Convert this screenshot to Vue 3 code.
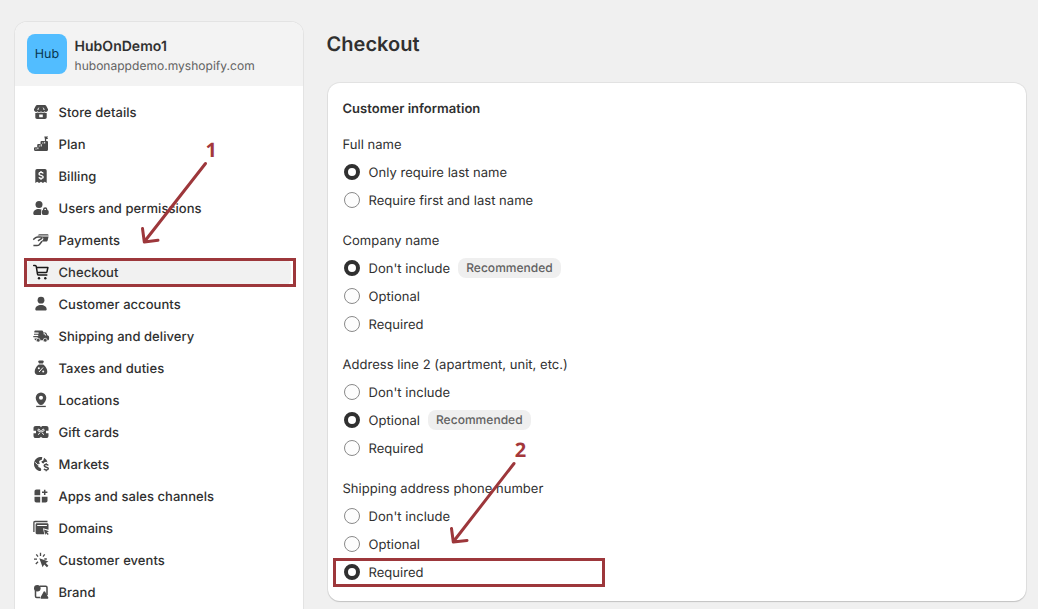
<script setup>
const nav = [
  { id: 'store', label: 'Store details' },
  { id: 'plan', label: 'Plan' },
  { id: 'billing', label: 'Billing' },
  { id: 'users', label: 'Users and permissions' },
  { id: 'payments', label: 'Payments' },
  { id: 'checkout', label: 'Checkout', active: true },
  { id: 'accounts', label: 'Customer accounts' },
  { id: 'shipping', label: 'Shipping and delivery' },
  { id: 'taxes', label: 'Taxes and duties' },
  { id: 'locations', label: 'Locations' },
  { id: 'gift', label: 'Gift cards' },
  { id: 'markets', label: 'Markets' },
  { id: 'apps', label: 'Apps and sales channels' },
  { id: 'domains', label: 'Domains' },
  { id: 'events', label: 'Customer events' },
  { id: 'brand', label: 'Brand' },
]

const groups = [
  { title: 'Full name', options: ['Only require last name', 'Require first and last name'], picked: 0 },
  { title: 'Company name', options: ["Don't include", 'Optional', 'Required'], picked: 0, recommended: 0 },
  { title: 'Address line 2 (apartment, unit, etc.)', options: ["Don't include", 'Optional', 'Required'], picked: 1, recommended: 1 },
  { title: 'Shipping address phone number', options: ["Don't include", 'Optional', 'Required'], picked: 2 },
]
</script>

<template>
  <div class="page">
    <aside class="sidebar">
      <header class="shop">
        <div class="avatar">Hub</div>
        <div class="shop-text">
          <div class="shop-name">HubOnDemo1</div>
          <div class="shop-url">hubonappdemo.myshopify.com</div>
        </div>
      </header>
      <nav class="nav">
        <div v-for="item in nav" :key="item.id" class="item" :class="{ active: item.active }">
          <svg class="icon" viewBox="0 0 20 20">
            <template v-if="item.id === 'store'">
              <path d="M6.200 3h7.600c.7 0 1.200.3 1.500.9L17 7.200v.9a2 2 0 0 1-3.500 1.200 2.300 2.300 0 0 1-3.500 0 2.300 2.300 0 0 1-3.500 0A2 2 0 0 1 3 8.100v-.9l1.700-3.300c.3-.6.8-.9 1.500-.9z" />
              <path d="M4.300 11c1 .2 1.700 0 2.300-.4 1 .6 2.400.6 3.400 0 1 .6 2.400.6 3.400 0 .6.400 1.300.6 2.300.4v4.300c0 1-.7 1.700-1.700 1.700H6c-1 0-1.700-.7-1.700-1.700z" />
              <path class="cut" d="M8.200 12.500h3.600v2.700H8.200z" /><path class="cutline" d="M6.900 8c0-.9.400-1.500.9-2.300M13.100 8c0-.9-.4-1.500-.9-2.300" />
            </template>
            <template v-else-if="item.id === 'plan'">
              <path d="M13.500 7H16a1 1 0 0 1 1 1v7.500a1.500 1.500 0 0 1-1.500 1.500h-11A1.500 1.500 0 0 1 3 15.500v-1.200a1 1 0 0 1 1-1h2.200V11a1 1 0 0 1 1-1h2.300V8a1 1 0 0 1 1-1z" />
              <path class="cutline" d="M6.900 15.200v-1.700M10.200 12.500v-2.300M13.700 9.500v-1.700M4.500 15h1M7.800 12h1M11.300 9h1" />
              <path d="M13.300 2.500h3.900l-1 1.200 1 1.200h-2v2.500h-1.300V4.900z" />
            </template>
            <template v-else-if="item.id === 'billing'">
              <path d="M6 3h8a1.700 1.700 0 0 1 1.700 1.700V17l-1.900-1.200L11.900 17 10 15.800 8.100 17l-1.900-1.200L4.300 17V4.700A1.700 1.700 0 0 1 6 3z" />
              <path class="cutline thick" d="M12.200 7.500C11.500 6 8 6 8 7.900c0 1.900 4.200 1 4.200 3 0 1.900-3.600 1.900-4.300.3M10 5v1.300M10 12.500v1.300" />
            </template>
            <template v-else-if="item.id === 'users'">
              <circle cx="8" cy="6.500" r="3.500" />
              <path d="M2.300 15.500c0-2.600 2.300-4.400 5.500-4.400 1.200 0 2.100.3 2.900.7-.5.500-.7 1-.7 1.700V17H3.600c-.8 0-1.300-.6-1.300-1.500z" />
              <path d="M12 12v-.6a2.200 2.200 0 0 1 4.400 0v.7c.8.100 1.300.7 1.300 1.500V15a2 2 0 0 1-2 2h-3a2 2 0 0 1-2-2v-1.400c0-.8.500-1.400 1.300-1.600zm1.400 0H15v-.6c0-1-1.600-1-1.600 0z" />
            </template>
            <template v-else-if="item.id === 'payments'">
              <path d="M9.300 4.200H16c1 0 1.700.5 1.600 1.400H6.500c.8-.9 1.600-1.400 2.800-1.400z" />
              <path d="M10.500 6.600h7.100l-.9 3.700c-.2.800-.8 1.200-1.600 1.200h-4.900l1.700-1.600c1-1 .4-2.400-1.400-3.300z" />
              <path class="line" d="M2.200 9.600 4.700 7.700c.7-.5 1.300-.8 2.100-.8h2.700c1.700 0 2 1 .9 1.700L7 10.900M2.400 15.600h3.400c1.100 0 2-.4 2.700-1.200l2.500-3.100" />
            </template>
            <template v-else-if="item.id === 'checkout'">
              <path class="cart" d="M2.700 3.600h1.500c.6 0 1 .4 1.100 1l1.200 7.500c.1.600.6 1 1.200 1h8.100M5.500 5.500h11.400l-.9 4.200c-.1.600-.5.900-1.100.9H6.300" />
              <circle cx="8" cy="16.300" r="1.200" /><circle cx="14.300" cy="16.300" r="1.200" />
            </template>
            <template v-else-if="item.id === 'accounts'">
              <circle cx="10" cy="6.200" r="3.400" />
              <path d="M4.300 15.300c0-2.700 2.500-4.400 5.700-4.400s5.700 1.700 5.700 4.400c0 .8-.6 1.300-1.400 1.300H5.700c-.8 0-1.400-.5-1.400-1.300z" />
            </template>
            <template v-else-if="item.id === 'shipping'">
              <path d="M4.600 4.500h6c1 0 1.700.7 1.700 1.700v.3h1.900c.7 0 1.200.3 1.400 1l.7 1.800 1 .5c.5.300.8.700.8 1.300v1.600c0 .9-.5 1.500-1.500 1.500H5c-1 0-1.500-.6-1.500-1.500v-.3h3.200v-1.200H2.300V10h4.900V8.800H3V7.700h4.600V6.500H3.300v-.7c0-.8.500-1.300 1.300-1.300z" />
              <circle class="wheel" cx="7.200" cy="14.200" r="1.900" /><circle class="wheel" cx="14.200" cy="14.200" r="1.900" />
              <path class="cutline" d="M12.500 7.800h1.500l.7 1.700" />
            </template>
            <template v-else-if="item.id === 'taxes'">
              <path d="M8.400 2.500h3.200c1 0 1.500 1 1 1.800l-.8 1.300H8.200l-.8-1.300c-.5-.8 0-1.800 1-1.800zM7.800 6.500h4.400c2.700 2 4.100 4.700 4.100 7.300 0 2-1.300 3.200-3.300 3.200H7c-2 0-3.300-1.200-3.300-3.200 0-2.600 1.400-5.300 4.100-7.300z" />
              <path class="cutline" d="m8 14 4-4.500" /><circle class="cut" cx="7.800" cy="10.200" r="1" /><circle class="cut" cx="12.200" cy="13.500" r="1" />
            </template>
            <template v-else-if="item.id === 'locations'">
              <path fill-rule="evenodd" d="M10 2.500a5.300 5.300 0 0 1 5.300 5.200c0 3-1.900 5-3.200 6.500-.9 1-3.300 1-4.200 0-1.300-1.500-3.200-3.500-3.200-6.500A5.300 5.300 0 0 1 10 2.500zm0 3.300a2 2 0 1 0 0 4 2 2 0 0 0 0-4z" />
              <path d="M5.200 15.800h9.600v1.300H5.200z" />
            </template>
            <template v-else-if="item.id === 'gift'">
              <path d="M4.800 4h3.400c.8 0 1.300.5 1.800 1.200C10.500 4.500 11 4 11.800 4h3.400c1.500 0 2.300.8 2.300 2.300v2.400h-2.500v2.600h2.500v2.400c0 1.500-.8 2.300-2.300 2.300h-3.400c-.8 0-1.300-.5-1.800-1.200-.5.700-1 1.200-1.800 1.200H4.800c-1.500 0-2.300-.8-2.300-2.300v-2.400H5V8.700H2.500V6.300C2.500 4.800 3.300 4 4.800 4z" />
              <path class="cutline" d="M9.400 9.400C7 9.400 6.300 8.400 7 7.500c.9-.9 2.400.2 2.400 1.900zm1.200 0c2.400 0 3.100-1 2.400-1.900-.9-.9-2.400.2-2.400 1.900zM9.400 10.400 7 12.700M10.600 10.400l2.400 2.300" />
            </template>
            <template v-else-if="item.id === 'markets'">
              <path d="M9 3c-3.400.5-6 3.400-6 7 0 3.800 2.900 6.900 6.600 7.100l.7-1.300-.7-1.800-2.200-1.100-.2-2 1.600-1.300L8 7.800l.8-1.400 2-.7.500-2.700A8 8 0 0 0 9 3z" />
              <path d="m13.100 3.700-.8 2.700-2 1.200.8 1.400 1.500.5.800-1.200 1.800-.5 1.300.8A7 7 0 0 0 13.100 3.700z" />
              <path class="cutline" d="m4.200 8.300 2.500 2.500 1.200-.6" />
              <path class="line" d="M17.200 11.500c-.7-1.300-4-1.300-4 .3 0 1.800 4.100.9 4.100 2.800 0 1.700-3.400 1.700-4.300.2M15.200 9.200v1.400M15.200 15.800v1.500" />
            </template>
            <template v-else-if="item.id === 'apps'">
              <path d="M5.500 3.500h3.700v5.700H3.500V5.500c0-1.300.7-2 2-2zM3.500 10.800h5.700v5.700H5.500c-1.300 0-2-.7-2-2zM10.800 10.800h5.700v3.700c0 1.300-.7 2-2 2h-3.700z" />
              <path class="line" d="M13.700 3.700v5.300M11 6.300h5.400" />
            </template>
            <template v-else-if="item.id === 'domains'">
              <path class="line thin" d="M2.900 14V4.600c0-.7.400-1.100 1.100-1.100h12.500" />
              <path fill-rule="evenodd" d="M6 5.300h10c1 0 1.500.5 1.500 1.500v4.900L12 10.200l1.300 6H6c-.9 0-1.400-.5-1.400-1.400v-8c0-1 .5-1.500 1.400-1.500zm.2 1.700v1h9.700V7z" />
              <path d="m13 11.500 5 1.800-2 1 1.700 1.700-.9 1-1.800-1.800-.8 1.900z" />
            </template>
            <template v-else-if="item.id === 'events'">
              <path d="m8.300 8.300 9.100 3.200-2.600 1.600 2.600 2.700-1.500 1.500-2.700-2.700-1.600 2.700z" />
              <path class="line thin" d="M9.500 2.700v3.200M5.300 4.300l1.700 2.300M13.700 4.300 12 6.600M3 9.200h3M13.300 9h2.500M4.800 14l2.200-2.300" />
            </template>
            <template v-else>
              <circle cx="6.300" cy="6.200" r="3.300" />
              <path class="line" d="M9 4.200h5.800c.8 0 1.200.4 1.200 1.200V13M4.500 8.500v5.700c0 .8.400 1.200 1.200 1.200H9" />
              <path d="M12.600 9.700c.4-.7 1.200-.7 1.600 0l3 5.500c.4.800 0 1.600-.9 1.600h-5.800c-.9 0-1.300-.8-.9-1.600z" />
            </template>
          </svg>
          <span class="label">{{ item.label }}</span>
        </div>
      </nav>
    </aside>

    <main class="main">
      <h1>Checkout</h1>
      <section class="card">
        <h2 class="label">Customer information</h2>
        <div v-for="g in groups" :key="g.title" class="group">
          <div class="label">{{ g.title }}</div>
          <div v-for="(o, i) in g.options" :key="o" class="option">
            <span class="radio" :class="{ on: g.picked === i }"></span>
            <span class="label">{{ o }}</span>
            <span v-if="g.recommended === i" class="badge">Recommended</span>
          </div>
        </div>
      </section>
    </main>

    <svg class="notes" viewBox="0 0 1038 609">
      <rect x="25.500" y="259.500" width="269" height="26" />
      <rect x="334.500" y="559.500" width="269" height="26" />
      <path d="M205.500 163.500 144.500 241.500M142.500 228.500 144.300 242 158 240.200" />
      <path d="M514 463.500 453.500 541.500M451.500 528.500 453.300 542 467 540.500" />
      <text x="205.500" y="157">1</text>
      <text x="514.700" y="457">2</text>
    </svg>
  </div>
</template>

<style>
body { background: #f0f0f0; }
</style>

<style scoped>
.page { position: relative; display: flex; align-items: flex-start; gap: 24px; box-sizing: border-box; width: 1038px; height: 609px; padding: 22px 11px 0 15px; overflow: hidden; background: #f0f0f0; color: #303030; font: 400 13px/20px Inter, "Liberation Sans", sans-serif; letter-spacing: .03px; text-rendering: geometricPrecision; }
.sidebar { flex: none; width: 288px; height: 620px; overflow: hidden; border-radius: 12px 12px 0 0; background: #fff; box-shadow: 0 0 0 1px #e3e3e3; }
.shop { display: flex; align-items: center; gap: 7.5px; height: 64px; box-sizing: border-box; padding: 0 12px; background: #f3f3f3; }
.shop-text { padding-top: 5px; }
.avatar { display: flex; align-items: center; justify-content: center; width: 40px; height: 40px; border-radius: 8px; background: #52bdff; color: #083550; font-size: 12.500px; line-height: 22px; box-sizing: border-box; padding-top: 2px; }
.shop-name { font-size: 14px; font-weight: 600; }
.shop-url { margin-top: -1px; padding-bottom: 1px; color: #616161; font-size: 12px; }
.nav { display: flex; flex-direction: column; gap: 4px; padding: 12px; }
.item { display: flex; align-items: center; gap: 7.5px; height: 28px; padding-left: 4px; border-radius: 8px; font-weight: 530; letter-spacing: .05px; }
.item.active { background: #f1f1f1; }
.icon { width: 20px; height: 20px; fill: #4a4a4a; }
.active .icon { fill: #1a1a1a; }
.cut { fill: #fff; }
.cutline { fill: none; stroke: #fff; stroke-width: 1; }
.line { fill: none; stroke: #4a4a4a; stroke-width: 1.5; }
.thick { stroke-width: 1.4; }
.thin { stroke-width: 1.3; }
.cart { fill: none; stroke: #1a1a1a; stroke-width: 1.5; stroke-linecap: round; stroke-linejoin: round; }
.wheel { stroke: #fff; stroke-width: .7; }
.main { flex: 1; min-width: 0; }
h1 { margin: 8px 0 25px -.5px; font-size: 20px; line-height: 28px; font-weight: 600; }
.card { box-sizing: border-box; width: 698px; height: 518px; margin-left: 1px; padding: 15px 14.500px; border-radius: 12px; background: #fff; box-shadow: 0 1px 1px #c4c4c4, 0 0 0 1px #e2e2e2; }
h2 { margin: 0 0 16px; font-size: 13px; font-weight: 640; }
.label { padding-top: 2px; line-height: 18px; }
.group { display: flex; flex-direction: column; gap: 8px; margin-bottom: 20px; }
.option { display: flex; align-items: center; height: 20px; }
.radio { box-sizing: border-box; width: 16px; height: 16px; margin: 0 8.500px 0 1.500px; border: 1px solid #8a8a8a; border-radius: 50%; background: #fdfdfd; }
.radio.on { border: 4px solid #303030; background: #fff; }
.badge { margin-left: 8px; padding: 0 8px; border-radius: 8px; background: #efefef; color: #616161; font-size: 12px; font-weight: 450; }
.notes { position: absolute; inset: 0; width: 1038px; height: 609px; fill: none; stroke: #9d373b; stroke-width: 3; stroke-linecap: round; stroke-linejoin: round; }
.notes rect { stroke-linejoin: miter; }
.notes text { fill: #a4383b; stroke: none; font: 700 20px "Open Sans", sans-serif; }
</style>
